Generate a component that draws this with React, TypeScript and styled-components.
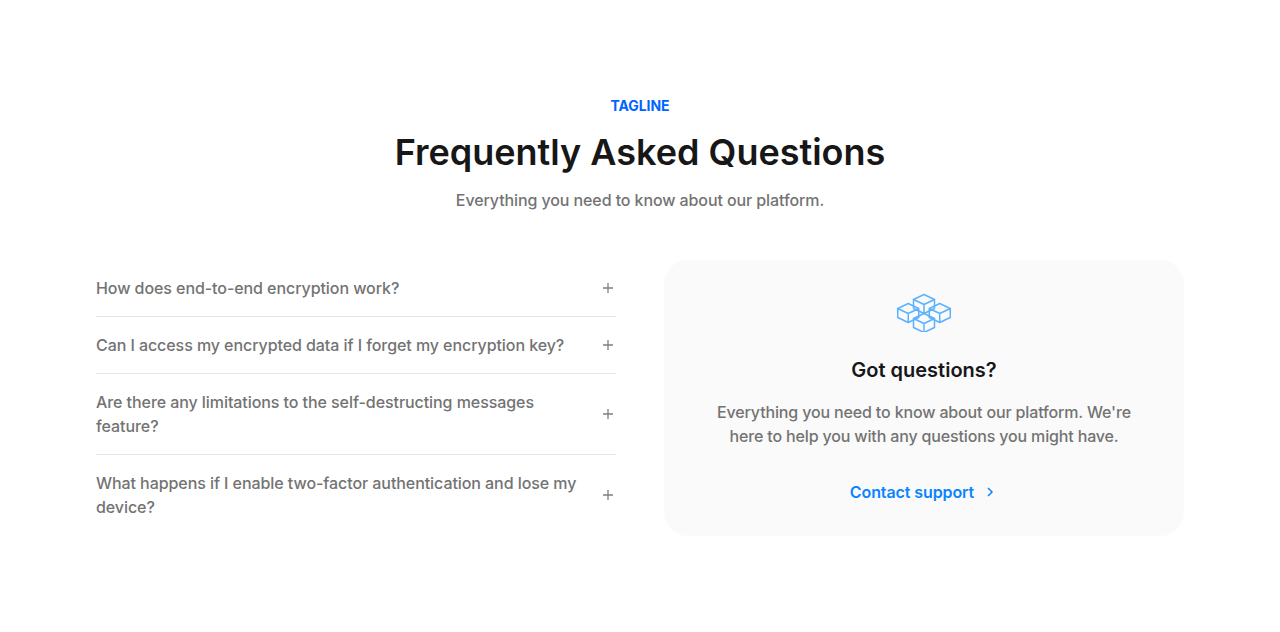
import React from "react";
import styled, { createGlobalStyle } from "styled-components";

const Global = createGlobalStyle`
  html, body { margin: 0; padding: 0; background: #fff; }
  body { font-family: Inter, "Liberation Sans", sans-serif; }
`;

const Page = styled.main`
  box-sizing: border-box;
  width: 1280px;
  height: 632px;
  padding: 96px 96px 0;
  display: flex;
  flex-direction: column;
`;
const Header = styled.header`
  display: flex;
  flex-direction: column;
  align-items: center;
  text-align: center;
`;
const Tagline = styled.div`
  font-size: 14px;
  line-height: 20px;
  font-weight: 700;
  letter-spacing: -0.1px;
  color: #0064ff;
`;
const Title = styled.h1`
  margin: 12px 0 12px;
  font-size: 36px;
  line-height: 48px;
  font-weight: 600;
  color: #171717;
`;
const Subtitle = styled.p`
  margin: 0;
  font-size: 16px;
  line-height: 24px;
  font-weight: 500;
  letter-spacing: -0.1px;
  color: #737373;
`;
const Columns = styled.div`
  margin-top: 48px;
  display: grid;
  grid-template-columns: 520px 520px;
  gap: 48px;
`;
const List = styled.div`
  display: flex;
  flex-direction: column;
`;
const Row = styled.div<{ $last?: boolean }>`
  display: flex;
  align-items: center;
  justify-content: space-between;
  gap: 16px;
  padding: 16px 0;
  border-bottom: ${(p) => (p.$last ? "none" : "1px solid #e5e5e5")};
`;
const Question = styled.span`
  font-size: 16px;
  line-height: 24px;
  font-weight: 500;
  letter-spacing: -0.07px;
  color: #737373;
`;
const PlusIcon = styled.svg`
  flex: none;
  width: 16px;
  height: 16px;
  color: #808080;
`;
const Card = styled.aside`
  box-sizing: border-box;
  height: 276px;
  padding: 32px;
  border-radius: 24px;
  background: #fafafa;
  display: flex;
  flex-direction: column;
  align-items: center;
  text-align: center;
`;
const CardIcon = styled.svg`
  width: 56px;
  height: 40px;
  display: block;
`;
const CardTitle = styled.h2`
  margin: 24px 0 16px;
  font-size: 20px;
  line-height: 28px;
  font-weight: 600;
  color: #171717;
`;
const CardText = styled.p`
  margin: 0;
  font-size: 16px;
  line-height: 24px;
  font-weight: 500;
  letter-spacing: -0.15px;
  color: #737373;
`;
const SupportLink = styled.a`
  margin-top: 32px;
  display: flex;
  align-items: center;
  gap: 8px;
  font-size: 16px;
  line-height: 24px;
  font-weight: 600;
  letter-spacing: -0.1px;
  color: #0a84ff;
  text-decoration: none;
`;
const Chevron = styled.svg`
  width: 16px;
  height: 16px;
`;

const Plus = () => (
  <PlusIcon viewBox="0 0 16 16" fill="none" stroke="currentColor" strokeWidth="1.3">
    <path d="M3 8h10M8 3v10" />
  </PlusIcon>
);

const cube = (x: number, y: number) => (
  <g transform={`translate(${x} ${y})`}>
    <path d="M0 5 L10.5 0 L21 5 L21 14 L10.5 19 L0 14 Z M0 5 L10.5 10 L21 5 M10.5 10 L10.5 19" />
  </g>
);

const questions = [
  "How does end-to-end encryption work?",
  "Can I access my encrypted data if I forget my encryption key?",
  "Are there any limitations to the self-destructing messages feature?",
  "What happens if I enable two-factor authentication and lose my device?",
];

export default function App() {
  return (
    <Page>
      <Global />
      <Header>
        <Tagline>TAGLINE</Tagline>
        <Title>Frequently Asked Questions</Title>
        <Subtitle>Everything you need to know about our platform.</Subtitle>
      </Header>
      <Columns>
        <List>
          {questions.map((q, i) => (
            <Row key={q} $last={i === questions.length - 1}>
              <Question>{q}</Question>
              <Plus />
            </Row>
          ))}
        </List>
        <Card>
          <CardIcon viewBox="0 0 56 40" fill="none" stroke="#5cb2ff" strokeWidth="1.5" strokeLinejoin="round">
            {cube(17.5, 2.5)}
            {cube(1.75, 11.5)}
            {cube(33.25, 11.5)}
            {cube(17.5, 21.5)}
          </CardIcon>
          <CardTitle>Got questions?</CardTitle>
          <CardText>
            Everything you need to know about our platform. We're
            <br />
            here to help you with any questions you might have.
          </CardText>
          <SupportLink href="#">
            Contact support
            <Chevron viewBox="0 0 16 16" fill="none" stroke="currentColor" strokeWidth="1.5">
              <path d="M6 4l4 4-4 4" />
            </Chevron>
          </SupportLink>
        </Card>
      </Columns>
    </Page>
  );
}
